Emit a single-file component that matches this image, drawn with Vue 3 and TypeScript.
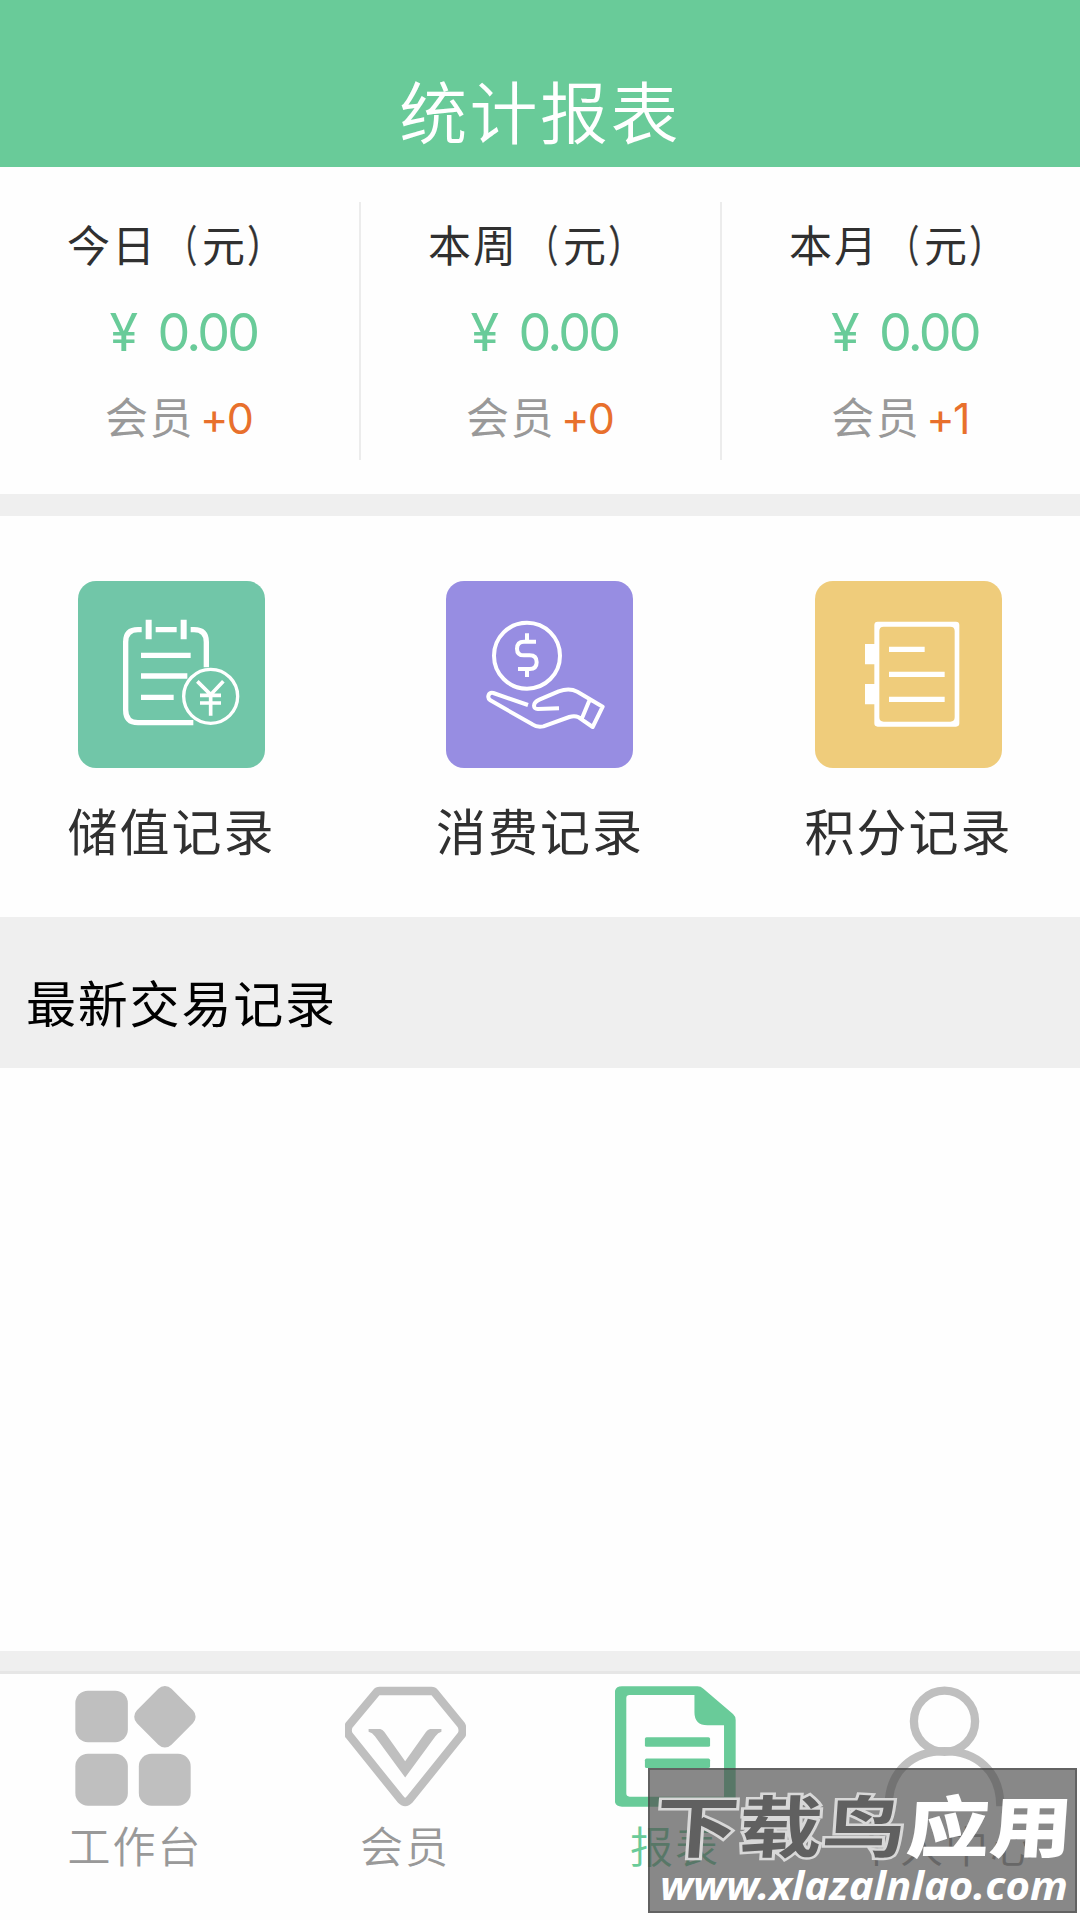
<script setup lang="ts">
interface Stat { label: string; amount: string; members: string }
interface Tab { label: string; icon: 'grid' | 'gem' | 'doc' | 'user'; active?: boolean }

const stats: Stat[] = [
  { label: '今日', amount: '0.00', members: '+0' },
  { label: '本周', amount: '0.00', members: '+0' },
  { label: '本月', amount: '0.00', members: '+1' },
]

const tabs: Tab[] = [
  { label: '工作台', icon: 'grid' },
  { label: '会员', icon: 'gem' },
  { label: '报表', icon: 'doc', active: true },
  { label: '个人中心', icon: 'user' },
]
</script>

<template>
  <div class="screen">
    <header class="header"><h1>统计报表</h1></header>

    <section class="stats">
      <div v-for="s in stats" :key="s.label" class="stat">
        <div class="stat-label">{{ s.label }}<span class="open">（</span>元<span class="close">）</span></div>
        <div class="stat-amount"><span>¥</span><span>{{ s.amount }}</span></div>
        <div class="stat-members"><span>会员</span><span class="delta">{{ s.members }}</span></div>
      </div>
    </section>

    <nav class="shortcuts">
      <a class="shortcut">
        <svg class="tile green" viewBox="54 63 561 561" fill="none" stroke="#fff" stroke-width="16">
          <path d="M245 209H234Q197 209 197 246V450Q197 488 234 488H400M287 209H350M392 209H402Q439 209 439 246V322" />
          <path d="M266 179V238M371 179V238" stroke-width="18" />
          <path d="M243 286H392M243 348H382M243 412H341" />
          <circle cx="452" cy="409" r="81" stroke-width="10" />
          <path d="M412 364L452 404L490 364M452 400V467M420 406H483M420 429H483" stroke-width="11" />
        </svg>
        <span>储值记录</span>
      </a>
      <a class="shortcut">
        <svg class="tile purple" viewBox="80 63 561 561" fill="none" stroke="#fff" stroke-width="12" stroke-linejoin="round">
          <circle cx="323" cy="287" r="99" />
          <path d="M350 245H314Q293 245 293 266Q293 286 314 286H331Q352 286 352 307Q352 327 331 327H296M323 220V245M323 327V351" />
          <path d="M326 435L222 399C207 396 202 413 213 421L339 493Q354 503 372 499L450 471Q466 466 478 472L520 501L550 440L474 395Q450 383 418 394L360 419C339 428 340 448 356 447L419 445M511 419L487 477" />
        </svg>
        <span>消费记录</span>
      </a>
      <a class="shortcut">
        <svg class="tile yellow" viewBox="105 63 561 561" fill="none" stroke="#fff" stroke-width="16">
          <path fill="#fff" fill-rule="evenodd" stroke="none" d="M293 185H528Q538 185 538 195V490Q538 500 528 500H293Q283 500 283 490V433H255V372H283V313H255V252H283V195Q283 185 293 185ZM311 200Q298 200 298 213V472Q298 485 311 485H511Q524 485 524 472V213Q524 200 511 200Z" />
          <path d="M327 268H434M327 343H494M327 418H494" />
        </svg>
        <span>积分记录</span>
      </a>
    </nav>

    <h2 class="section-title">最新交易记录</h2>
    <main class="records"></main>

    <footer class="tabbar">
      <a v-for="t in tabs" :key="t.label" class="tab" :class="{ active: t.active }">
        <svg v-if="t.icon === 'grid'" class="tab-icon" viewBox="224 138 364 364" fill="currentColor">
          <rect x="225" y="152" width="158" height="155" rx="38" />
          <rect x="225" y="342" width="158" height="156" rx="38" />
          <rect x="416" y="342" width="156" height="156" rx="38" />
          <rect x="421" y="157" width="147" height="147" rx="28" transform="rotate(45 494.5 230.5)" />
        </svg>
        <svg v-else-if="t.icon === 'gem'" class="tab-icon" viewBox="134 138 364 364" fill="none" stroke="currentColor" stroke-width="25" stroke-linejoin="round">
          <path d="M238 153H394Q400 153 404 158L484 256Q492 273 484 286L328 480Q315 494 302 480L146 286Q138 273 146 256L228 158Q232 153 238 153Z" />
          <path d="M205 267H240Q247 268 252 276L315 364L378 276Q383 268 390 267H424V276Q414 278 406 289L315 413L224 289Q216 278 205 276Z" fill="currentColor" stroke="none" />
        </svg>
        <svg v-else-if="t.icon === 'doc'" class="tab-icon" viewBox="104 138 364 364" fill="currentColor">
          <path fill-rule="evenodd" d="M125 139H352Q362 139 370 146L459 222Q467 229 467 240V480Q467 501 446 501H125Q103 501 103 480V160Q103 139 125 139ZM148 165Q138 165 138 175V461Q138 471 148 471H432V256H382Q343 256 343 217V165Z" />
          <rect x="194" y="292" width="196" height="29" rx="5" />
          <rect x="194" y="356" width="196" height="29" rx="5" />
        </svg>
        <svg v-else class="tab-icon" viewBox="193 138 364 364" fill="none" stroke="currentColor" stroke-width="25">
          <circle cx="372" cy="244" r="92" />
          <path d="M204 500C204 392 278 334 372 334S540 392 540 500" />
        </svg>
        <span>{{ t.label }}</span>
      </a>
    </footer>

    <aside class="watermark">
      <svg viewBox="648 1768 429 145" width="429" height="145">
        <g class="wm-name" transform="translate(0 1852) skewX(-4)">
          <text x="654" y="0" textLength="250" lengthAdjust="spacingAndGlyphs" class="wm-dark">下载鸟</text>
          <text x="905" y="0" textLength="166" lengthAdjust="spacingAndGlyphs" class="wm-light">应用</text>
        </g>
        <text x="660" y="1900" textLength="408" lengthAdjust="spacingAndGlyphs" class="wm-url">www.xlazalnlao.com</text>
      </svg>
    </aside>
  </div>
</template>

<style>
body { margin: 0; background: #fff; }
</style>

<style scoped>
.screen {
  position: relative;
  display: flex;
  flex-direction: column;
  width: 1080px;
  height: 1920px;
  overflow: hidden;
  background: #fefefe;
  font-family: "Inter", "Noto Sans CJK SC", sans-serif;
  color: #303030;
}
h1, h2 { margin: 0; font-weight: 400; }
.header {
  box-sizing: border-box;
  height: 167px;
  flex: none;
  padding-top: 60px;
  background: #69cb99;
  text-align: center;
}
h1 {
  font-family: "Noto Sans CJK SC", sans-serif;
  font-size: 68px;
  line-height: 100px;
  letter-spacing: 2.4px;
  font-weight: 350;
  color: #fff;
}
.stats {
  box-sizing: border-box;
  display: flex;
  flex: none;
  height: 349px;
  padding: 35px 0 33px;
  border-bottom: 22px solid #efefef;
}
.stat {
  box-sizing: border-box;
  width: 361px;
  height: 258px;
  flex: none;
  border-right: 2px solid #ececec;
}
.stat:last-child { width: 358px; border-right: 0; }
.stat-label {
  padding-left: 67px;
  margin-top: 12px;
  font-size: 43px;
  line-height: 64px;
  letter-spacing: 2px;
}
.open, .close {
  display: inline-block;
  font-family: "Noto Sans CJK SC", sans-serif;
  line-height: 1;
  -webkit-text-stroke: 0.6px #303030;
}
.open { transform: scaleX(0.66); transform-origin: 75% 50%; }
.close { transform: scaleX(0.75); transform-origin: 5% 50%; }
.stat-amount {
  display: flex;
  justify-content: center;
  gap: 22px;
  padding-left: 8px;
  margin-top: 23px;
  font-size: 52px;
  line-height: 64px;
  letter-spacing: -2.7px;
  color: #69cb99;
}
.stat-members {
  display: flex;
  justify-content: center;
  gap: 6px;
  margin-top: 21px;
  padding-right: 2px;
  font-size: 43px;
  line-height: 64px;
  letter-spacing: 1.5px;
  color: #999;
}
.delta { letter-spacing: -1.7px; color: #e8702c; }
.shortcuts {
  display: flex;
  flex: none;
  justify-content: space-between;
  height: 336px;
  padding: 65px 67.6px 0 67.4px;
}
.shortcut {
  display: flex;
  flex-direction: column;
  align-items: center;
  gap: 28px;
  width: 208px;
  font-size: 50px;
  line-height: 74px;
  letter-spacing: 2px;
  white-space: nowrap;
}
.tile { width: 187px; height: 187px; border-radius: 18px; }
.green { background: #71c6a8; }
.purple { background: #978de2; }
.yellow { background: #efcc7b; }
.section-title {
  flex: none;
  height: 151px;
  padding-left: 26px;
  background: #efefef;
  font-size: 50px;
  line-height: 177px;
  letter-spacing: 1.8px;
  color: #000;
}
.records { flex: 1; }
.tabbar {
  box-sizing: border-box;
  display: flex;
  flex: none;
  height: 269px;
  border-top: 20px solid #efefef;
  box-shadow: inset 0 3px #e6e6e6;
}
.tab {
  display: flex;
  flex-direction: column;
  align-items: center;
  width: 270px;
  padding-top: 15px;
  color: #bfbfbf;
}
.tab span {
  margin-top: 8px;
  font-size: 43px;
  line-height: 64px;
  letter-spacing: 2px;
  font-weight: 350;
  color: #999;
}
.tab-icon { width: 121px; height: 121px; }
.active, .active span { color: #69cb99; }
.watermark {
  position: absolute;
  left: 648px;
  top: 1768px;
  width: 429px;
  height: 145px;
  background: rgba(80, 80, 80, 0.68);
  box-shadow: inset 0 0 0 2px rgba(60, 60, 60, 0.5);
}
.watermark svg { display: block; }
.wm-name { font: 900 67px "Noto Sans CJK SC", sans-serif; }
.wm-dark { fill: #606060; stroke: #d8d8d8; stroke-width: 5px; paint-order: stroke; font-weight: 700; }
.wm-light { fill: #fff; }
.wm-url { font: italic 700 40px "Noto Sans", sans-serif; fill: #fff; }
</style>
